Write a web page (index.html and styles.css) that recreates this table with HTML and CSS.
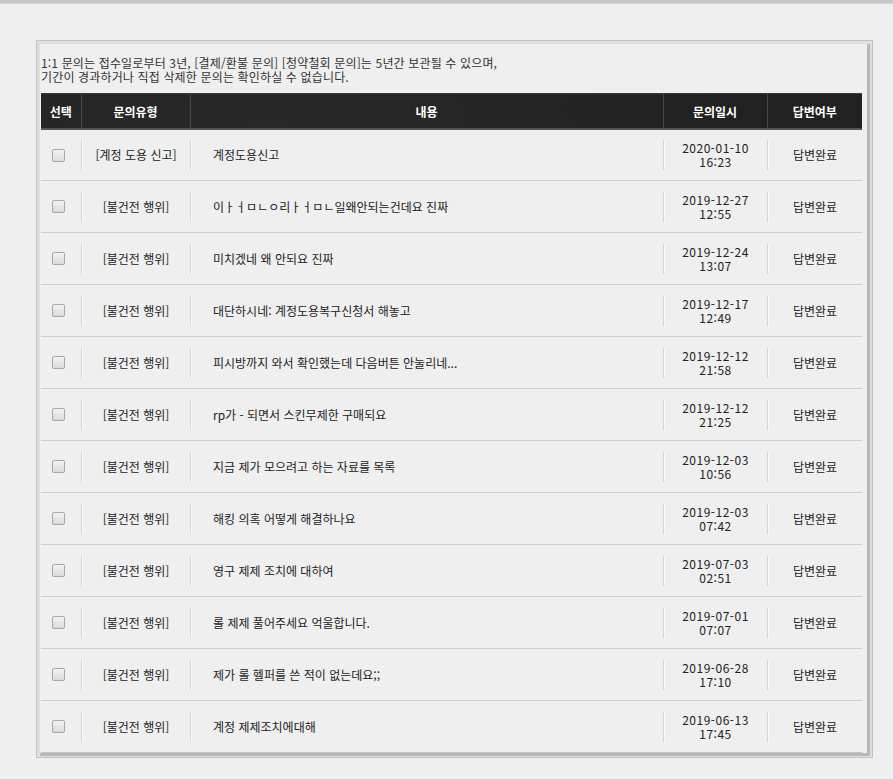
FILE: index.html
```html
<!DOCTYPE html>
<html lang="ko">
<head>
<meta charset="utf-8">
<title>1:1 문의</title>
<link rel="stylesheet" href="styles.css">
</head>
<body>
<div class="topbar"></div>
<div class="box">
  <div class="inner">
    <p class="notice">1:1 문의는 접수일로부터 3년, [결제/환불 문의] [청약철회 문의]는 5년간 보관될 수 있으며,<br>기간이 경과하거나 직접 삭제한 문의는 확인하실 수 없습니다.</p>
    <table class="list">
      <colgroup>
        <col class="c1"><col class="c2"><col class="c3"><col class="c4"><col class="c5">
      </colgroup>
      <thead>
        <tr>
          <th>선택</th><th>문의유형</th><th>내용</th><th>문의일시</th><th>답변여부</th>
        </tr>
      </thead>
      <tbody>
        <tr><td class="chk"><span class="cb"></span></td><td><div class="sep">[계정 도용 신고]</div></td><td><div class="sep left">계정도용신고</div></td><td><div class="sep date">2020-01-10<br>16:23</div></td><td><div class="sep">답변완료</div></td></tr>
        <tr><td class="chk"><span class="cb"></span></td><td><div class="sep">[불건전 행위]</div></td><td><div class="sep left">이ㅏㅓㅁㄴㅇ리ㅏㅓㅁㄴ일왜안되는건데요 진짜</div></td><td><div class="sep date">2019-12-27<br>12:55</div></td><td><div class="sep">답변완료</div></td></tr>
        <tr><td class="chk"><span class="cb"></span></td><td><div class="sep">[불건전 행위]</div></td><td><div class="sep left">미치겠네 왜 안되요 진짜</div></td><td><div class="sep date">2019-12-24<br>13:07</div></td><td><div class="sep">답변완료</div></td></tr>
        <tr><td class="chk"><span class="cb"></span></td><td><div class="sep">[불건전 행위]</div></td><td><div class="sep left">대단하시네: 계정도용복구신청서 해놓고</div></td><td><div class="sep date">2019-12-17<br>12:49</div></td><td><div class="sep">답변완료</div></td></tr>
        <tr><td class="chk"><span class="cb"></span></td><td><div class="sep">[불건전 행위]</div></td><td><div class="sep left">피시방까지 와서 확인했는데 다음버튼 안눌리네...</div></td><td><div class="sep date">2019-12-12<br>21:58</div></td><td><div class="sep">답변완료</div></td></tr>
        <tr><td class="chk"><span class="cb"></span></td><td><div class="sep">[불건전 행위]</div></td><td><div class="sep left">rp가 - 되면서 스킨무제한 구매되요</div></td><td><div class="sep date">2019-12-12<br>21:25</div></td><td><div class="sep">답변완료</div></td></tr>
        <tr><td class="chk"><span class="cb"></span></td><td><div class="sep">[불건전 행위]</div></td><td><div class="sep left">지금 제가 모으려고 하는 자료를 목록</div></td><td><div class="sep date">2019-12-03<br>10:56</div></td><td><div class="sep">답변완료</div></td></tr>
        <tr><td class="chk"><span class="cb"></span></td><td><div class="sep">[불건전 행위]</div></td><td><div class="sep left">해킹 의혹 어떻게 해결하나요</div></td><td><div class="sep date">2019-12-03<br>07:42</div></td><td><div class="sep">답변완료</div></td></tr>
        <tr><td class="chk"><span class="cb"></span></td><td><div class="sep">[불건전 행위]</div></td><td><div class="sep left">영구 제제 조치에 대하여</div></td><td><div class="sep date">2019-07-03<br>02:51</div></td><td><div class="sep">답변완료</div></td></tr>
        <tr><td class="chk"><span class="cb"></span></td><td><div class="sep">[불건전 행위]</div></td><td><div class="sep left">롤 제제 풀어주세요 억울합니다.</div></td><td><div class="sep date">2019-07-01<br>07:07</div></td><td><div class="sep">답변완료</div></td></tr>
        <tr><td class="chk"><span class="cb"></span></td><td><div class="sep">[불건전 행위]</div></td><td><div class="sep left">제가 롤 헬퍼를 쓴 적이 없는데요;;</div></td><td><div class="sep date">2019-06-28<br>17:10</div></td><td><div class="sep">답변완료</div></td></tr>
        <tr class="last"><td class="chk"><span class="cb"></span></td><td><div class="sep">[불건전 행위]</div></td><td><div class="sep left">계정 제제조치에대해</div></td><td><div class="sep date">2019-06-13<br>17:45</div></td><td><div class="sep">답변완료</div></td></tr>
      </tbody>
    </table>
  </div>
</div>
</body>
</html>
```
FILE: styles.css
```css
html, body {
  margin: 0;
  padding: 0;
  background: #efefef;
}
body {
  font-family: "Noto Sans CJK KR", "Noto Sans", sans-serif;
  font-size: 12px;
  color: #222;
}
.topbar {
  height: 3px;
  background: #c6c6c6;
  border-bottom: 1px solid #d6d6d6;
}
.box {
  margin: 36px 0 0 36px;
  width: 830px;
  border: 1px solid #c2c2c2;
  background: #dedede;
  padding: 3px 2px 1px 3px;
}
.inner {
  background: #efefef;
  border-right: 3px solid #b8b8b8;
  border-bottom: 3px solid #b8b8b8;
  padding: 12px 0 0 1px;
}
.notice {
  margin: 0 0 9px 0;
  line-height: 14px;
  color: #333;
  font-size: 12px;
  letter-spacing: 0.15px;
}
.list {
  width: 821px;
  border-collapse: collapse;
  table-layout: fixed;
}
.c1 { width: 40px; }
.c2 { width: 109px; }
.c3 { width: 473px; }
.c4 { width: 104px; }
.c5 { width: 95px; }
.list th {
  height: 34px;
  padding: 0;
  color: #fff;
  font-weight: bold;
  font-size: 12px;
  text-align: center;
  background:
    radial-gradient(ellipse at 30% 40%, rgba(70,70,70,0.35), rgba(0,0,0,0) 60%),
    radial-gradient(ellipse at 80% 70%, rgba(60,60,60,0.3), rgba(0,0,0,0) 50%),
    linear-gradient(#232323, #161616);
  background-attachment: fixed;
  border-left: 1px solid #4a4844;
  border-top: 1px solid #3a3a3a;
  border-bottom: 2px solid #5a544c;
}
.list th:first-child { border-left: none; }
.list td {
  height: 51px;
  padding: 0;
  text-align: center;
  vertical-align: middle;
  border-bottom: 1px solid #cfcfcf;
  color: #222;
  line-height: 14px;
}
.list tbody tr:first-child td { height: 50px; border-top: 1px solid #f8f8f8; }
.list tr.last td { border-bottom: 1px solid #c4c4c4; }
.chk { text-align: left !important; }
.cb {
  display: block;
  margin-left: 11px;
  width: 11px;
  height: 11px;
  border: 1px solid #a8a8a8;
  border-radius: 2px;
  background: linear-gradient(#f3f3f3, #dcdcdc);
}
.sep {
  height: 30px;
  display: flex;
  align-items: center;
  justify-content: center;
  flex-direction: column;
  border-left: 1px solid #d4d4d4;
  box-shadow: inset 1px 0 0 #fafafa;
}
.sep.left {
  align-items: flex-start;
  padding-left: 22px;
}
.sep.date {
  letter-spacing: 0.5px;
}
```
